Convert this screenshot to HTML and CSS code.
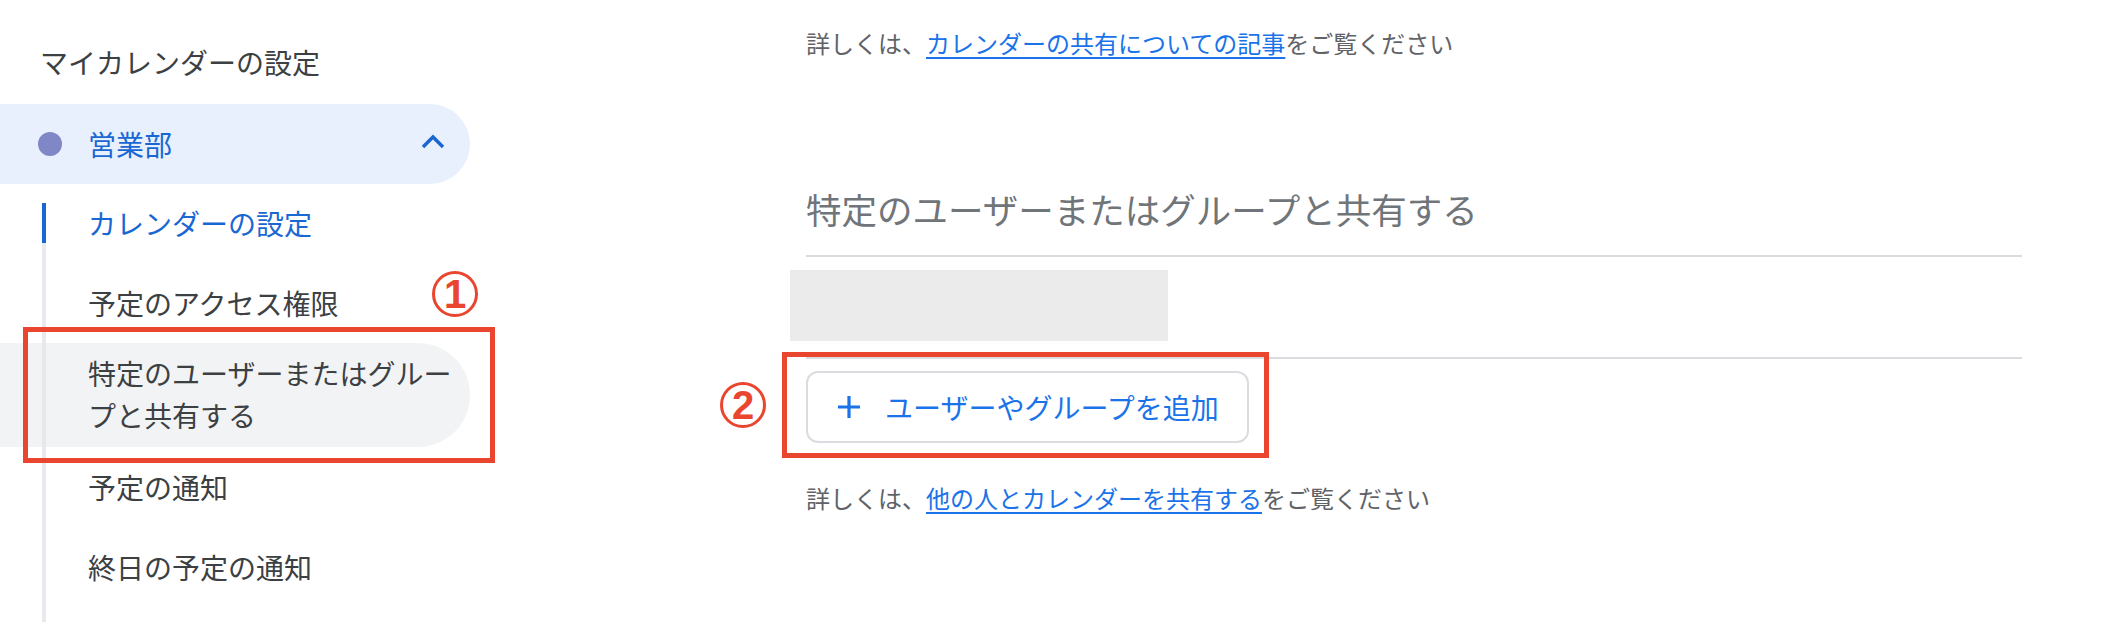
FILE: index.html
```html
<!DOCTYPE html>
<html lang="ja">
<head>
<meta charset="UTF-8" />
<meta name="viewport" content="width=device-width, initial-scale=1.0" />
<title>カレンダーの設定</title>
<link rel="stylesheet" href="styles.css">
</head>
<body>

<div class="page">
  <nav class="sidebar">
    <div class="sidebar-title">マイカレンダーの設定</div>

    <div class="cal-row">
      <span class="cal-dot"></span>
      <span class="cal-name">営業部</span>
      <svg class="chevron" width="24" height="16" viewBox="0 0 24 16">
        <path d="M2 14 L12 4 L22 14" fill="none" stroke="#1967d2" stroke-width="3.4" />
      </svg>
    </div>

    <ul class="sublist">
      <li class="sub-item active">カレンダーの設定</li>
      <li class="sub-item">予定のアクセス権限</li>
      <li class="sub-item current">特定のユーザーまたはグループと共有する</li>
      <li class="sub-item">予定の通知</li>
      <li class="sub-item">終日の予定の通知</li>
    </ul>
  </nav>

  <main class="main">
    <p class="note">詳しくは、<a href="#">カレンダーの共有についての記事</a>をご覧ください</p>

    <h2 class="section-title">特定のユーザーまたはグループと共有する</h2>

    <div class="share-list">
      <!-- 共有先（非表示） -->
      <div class="redacted"></div>
    </div>

    <button class="add-btn" type="button">
      <svg class="plus" width="28" height="28" viewBox="0 0 28 28">
        <path d="M14 3 V25 M3 14 H25" fill="none" stroke="#1a73e8" stroke-width="3.2" />
      </svg>
      ユーザーやグループを追加
    </button>

    <p class="note note-bottom">詳しくは、<a href="#">他の人とカレンダーを共有する</a>をご覧ください</p>
  </main>

  <!-- 注釈 -->
  <div class="frame frame-1"></div>
  <div class="mark mark-1">1</div>
  <div class="frame frame-2"></div>
  <div class="mark mark-2">2</div>
</div>

</body>
</html>
```

FILE: styles.css
```css
body {
  margin: 0;
  overflow: hidden;
  background: #fff;
  font-family: "Noto Sans CJK JP", "Noto Sans", sans-serif;
  color: #3c4043;
}
.page {
  position: relative;
  display: flex;
  width: 2120px;
  height: 622px;
}

/* サイドバー */
.sidebar {
  width: 470px;
  flex-shrink: 0;
}
.sidebar-title {
  padding: 42px 0 0 40px;
  margin-bottom: 22px;
  font-size: 28px;
  line-height: 40px;
}
.cal-row {
  display: flex;
  align-items: center;
  height: 80px;
  padding: 0 25px 0 38px;
  background: #e8f0fe;
  border-radius: 0 40px 40px 0;
  box-sizing: border-box;
}
.cal-dot {
  width: 24px;
  height: 24px;
  border-radius: 50%;
  background: #7f87c7;
}
.cal-name {
  margin-left: 26px;
  font-size: 28px;
  color: #1967d2;
}
.chevron {
  margin-left: auto;
  margin-top: -6px;
}
.sublist {
  list-style: none;
  margin: 19px 0 0 42px;
  padding: 0 0 40px;
  border-left: 4px solid #e8eaed;
}
.sub-item {
  padding: 20px 0 20px 42px;
  font-size: 28px;
  line-height: 40px;
}
.sub-item.active {
  padding-top: 0;
  margin-left: -4px;
  padding-left: 46px;
  color: #1967d2;
  background: linear-gradient(#1967d2, #1967d2) no-repeat 0 0 / 4px 40px;
}
.sub-item.current {
  margin-left: -46px;
  padding: 9px 10px 11px 88px;
  line-height: 42px;
  border-radius: 0 53px 53px 0;
  background: linear-gradient(to right, #f1f3f4 42px, #e6e8eb 42px, #e6e8eb 46px, #f1f3f4 46px);
}

/* メイン */
.main {
  margin-left: 336px;
  width: 1216px;
}
.note {
  margin: 25px 0 0;
  font-size: 24px;
  line-height: 36px;
  color: #5f6368;
}
.note a {
  color: #1a73e8;
  text-decoration-thickness: 2px;
  text-underline-offset: 4px;
}
.section-title {
  margin: 124px 0 0;
  font-size: 35.5px;
  font-weight: 400;
  line-height: 48px;
  color: #70757a;
}
.share-list {
  margin-top: 22px;
  border-top: 2px solid #dadce0;
  border-bottom: 2px solid #dadce0;
  padding: 13px 0 16px;
}
.redacted {
  margin-left: -16px;
  width: 378px;
  height: 71px;
  background: #ebebeb;
}
.add-btn {
  display: flex;
  align-items: center;
  gap: 22px;
  margin-top: 12px;
  height: 72px;
  padding: 0 28px 0 27px;
  border: 2px solid #dadce0;
  border-radius: 12px;
  background: #fff;
  font-family: inherit;
  font-size: 28px;
  color: #1a73e8;
}
.note-bottom {
  margin-top: 37px;
}

/* 注釈 */
.frame {
  position: absolute;
  border: 5px solid #e9452f;
  box-sizing: border-box;
}
.frame-1 {
  left: 23px;
  top: 327px;
  width: 472px;
  height: 136px;
}
.frame-2 {
  left: 782px;
  top: 352px;
  width: 487px;
  height: 106px;
}
.mark {
  position: absolute;
  width: 46px;
  height: 46px;
  display: flex;
  align-items: center;
  justify-content: center;
  border: 3px solid #e9452f;
  border-radius: 50%;
  box-sizing: border-box;
  font-family: "Liberation Sans", sans-serif;
  font-weight: bold;
  font-size: 40px;
  line-height: 1;
  color: #e9452f;
}
.mark-1 {
  left: 432px;
  top: 271px;
}
.mark-2 {
  left: 720px;
  top: 382px;
}
```
